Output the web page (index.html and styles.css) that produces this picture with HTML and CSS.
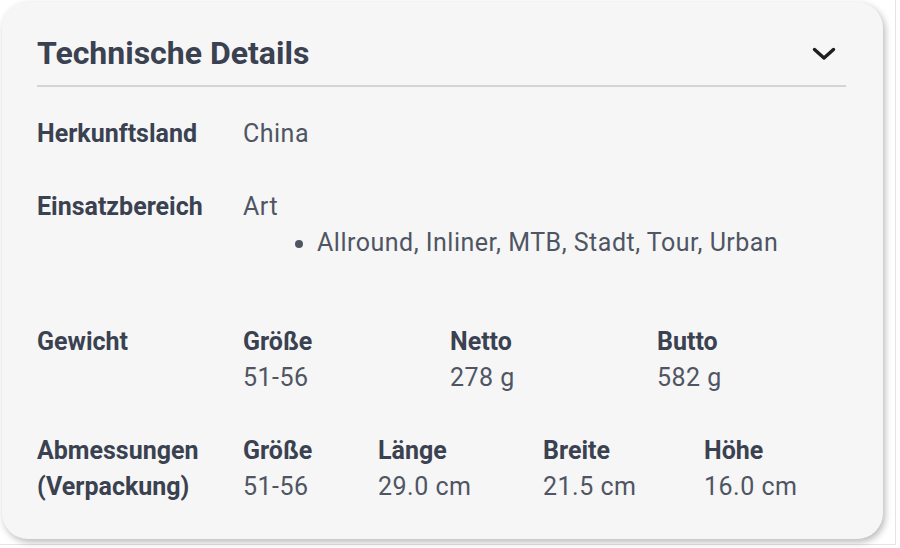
FILE: index.html
```html
<!DOCTYPE html>
<html lang="de">
<head>
<meta charset="utf-8">
<title>Technische Details</title>
<link rel="stylesheet" href="styles.css">
</head>
<body>
<div class="frame">
  <section class="card">
    <header class="card-head">
      <h2 class="title">Technische Details</h2>
      <svg class="chevron" width="24" height="14" viewBox="0 0 24 14" aria-hidden="true">
        <polyline points="2.5,2.5 12,11 21.5,2.5" fill="none" stroke="#1e1e1e" stroke-width="3.4" stroke-linecap="round" stroke-linejoin="round"/>
      </svg>
    </header>
    <div class="rows">
      <div class="row">
        <div class="label">Herkunftsland</div>
        <div class="value">China</div>
      </div>
      <div class="row">
        <div class="label">Einsatzbereich</div>
        <div class="value">
          <div>Art</div>
          <ul class="list">
            <li>Allround, Inliner, MTB, Stadt, Tour, Urban</li>
          </ul>
        </div>
      </div>
      <div class="row">
        <div class="label">Gewicht</div>
        <div class="sub sub-weight">
          <div class="sub-head">Größe</div>
          <div class="sub-head">Netto</div>
          <div class="sub-head">Butto</div>
          <div class="value">51-56</div>
          <div class="value">278 g</div>
          <div class="value">582 g</div>
        </div>
      </div>
      <div class="row">
        <div class="label">Abmessungen<br>(Verpackung)</div>
        <div class="sub sub-dim">
          <div class="sub-head">Größe</div>
          <div class="sub-head">Länge</div>
          <div class="sub-head">Breite</div>
          <div class="sub-head">Höhe</div>
          <div class="value">51-56</div>
          <div class="value">29.0 cm</div>
          <div class="value">21.5 cm</div>
          <div class="value">16.0 cm</div>
        </div>
      </div>
    </div>
  </section>
</div>
</body>
</html>
```

FILE: styles.css
```css
html, body {
  margin: 0;
  padding: 0;
  background: #ffffff;
}

body {
  font-family: Roboto, "Liberation Sans", sans-serif;
  width: 900px;
  height: 548px;
  overflow: hidden;
}

.frame {
  width: 896px;
  height: 545px;
  border-right: 1px solid #e4e4e4;
  border-bottom: 1px solid #e4e4e4;
  padding: 2px 0 0 2px;
  box-sizing: border-box;
}

.card {
  width: 881px;
  box-sizing: border-box;
  background: #f6f6f6;
  border-radius: 26px;
  box-shadow: 2px 3px 7px rgba(0, 0, 0, 0.28);
  padding: 31px 37px 34px 35px;
}

.card-head {
  display: flex;
  align-items: center;
  justify-content: space-between;
  padding-bottom: 12px;
  border-bottom: 2px solid #d4d4d4;
}

.title {
  margin: 0;
  font-size: 32px;
  line-height: 40px;
  font-weight: 700;
  color: #3a4150;
}

.chevron {
  display: block;
  margin-right: 10px;
  margin-top: 2px;
}

.rows {
  margin-top: 29px;
  display: flex;
  flex-direction: column;
  gap: 37px;
}

.row {
  display: grid;
  grid-template-columns: 206px 1fr;
  font-size: 25px;
  line-height: 36px;
}

.label,
.sub-head {
  font-weight: 700;
  color: #3a4150;
}

.value {
  font-weight: 400;
  color: #4f5563;
  letter-spacing: 0.5px;
}

.list {
  margin: 0 0 26px 0;
  padding-left: 74px;
  list-style: disc;
}

.sub {
  display: grid;
}

.sub-weight {
  grid-template-columns: 207px 207px 1fr;
}

.sub-dim {
  grid-template-columns: 135px 165px 161px 1fr;
}
```
